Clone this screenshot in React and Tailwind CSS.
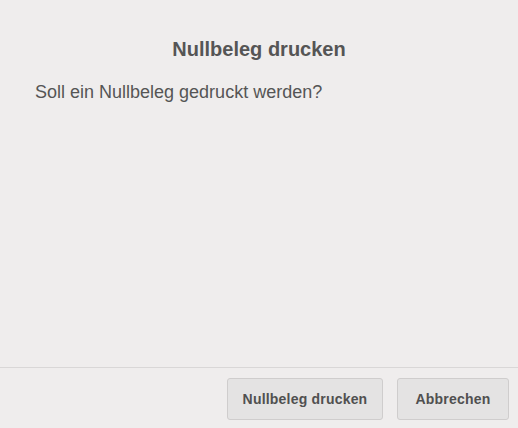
export default function App() {
  return (
    <div
      className="flex h-[428px] w-[518px] flex-col bg-[#efeded] text-[#555555]"
      style={{ fontFamily: '"Liberation Sans", Arial, sans-serif' }}
    >
      <div className="flex-1">
        <h2 className="pt-[37px] text-center text-[20px] font-bold leading-[24px]">
          Nullbeleg drucken
        </h2>
        <p className="px-[35px] pt-[20px] text-[18px] leading-[22px]">
          Soll ein Nullbeleg gedruckt werden?
        </p>
      </div>
      <div className="flex h-[61px] items-start justify-end gap-[14px] border-t border-[#d9d7d7] pr-[9px] pt-[10px]">
        <button className="h-[42px] w-[156px] rounded-[3px] border border-[#cfcdcd] bg-[#e4e3e3] text-[14px] font-bold tracking-[0.2px] text-[#505050]">
          Nullbeleg drucken
        </button>
        <button className="h-[42px] w-[112px] rounded-[3px] border border-[#cfcdcd] bg-[#e4e3e3] text-[14px] font-bold tracking-[0.2px] text-[#505050]">
          Abbrechen
        </button>
      </div>
    </div>
  );
}
